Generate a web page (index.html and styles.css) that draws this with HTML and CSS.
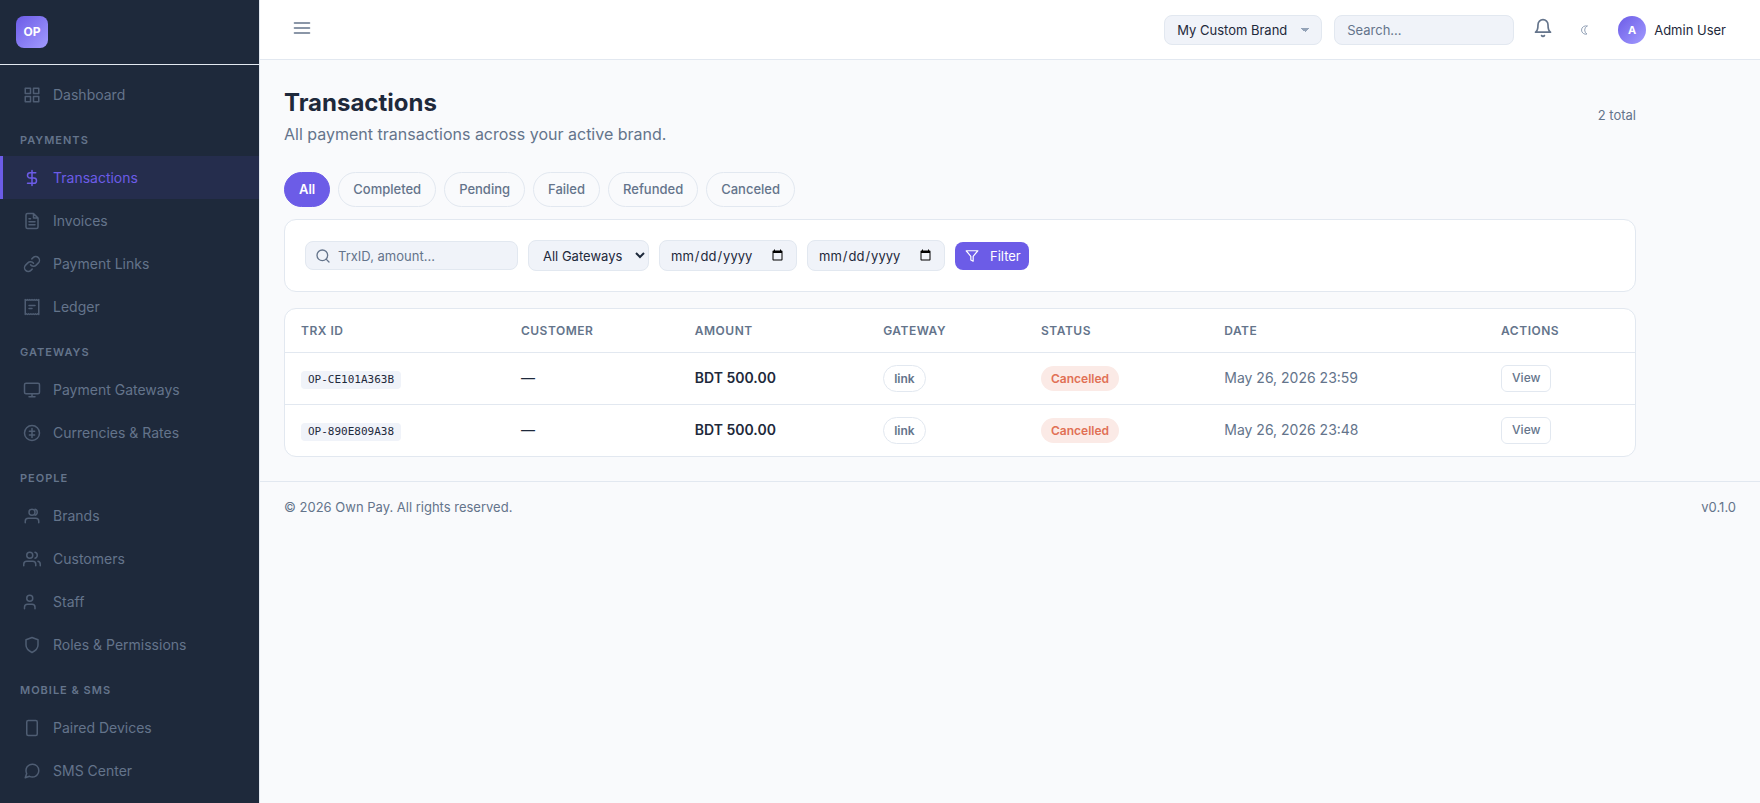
FILE: index.html
```html
<!DOCTYPE html>
<html lang="en">
<head>
<meta charset="utf-8">
<meta name="viewport" content="width=device-width, initial-scale=1">
<title>Transactions - Own Pay</title>
<link rel="stylesheet" href="styles.css">
</head>
<body>
<div class="app">
  <aside class="sidebar">
    <div class="sidebar-header"><span class="logo">OP</span></div>
    <nav class="nav" aria-label="Main">
      <a class="nav-item" href="#"><svg class="nav-icon" viewBox="0 0 24 24"><rect x="3" y="3" width="7" height="7"/><rect x="14" y="3" width="7" height="7"/><rect x="3" y="14" width="7" height="7"/><rect x="14" y="14" width="7" height="7"/></svg>Dashboard</a>
      <div class="nav-label">Payments</div>
      <a class="nav-item active" href="#" aria-current="page"><svg class="nav-icon" viewBox="0 0 24 24"><path d="M12 2v20M17 5H9.500a3.500 3.500 0 0 0 0 7h5a3.500 3.500 0 0 1 0 7H6"/></svg>Transactions</a>
      <a class="nav-item" href="#"><svg class="nav-icon" viewBox="0 0 24 24"><path d="M14 2H6a2 2 0 0 0-2 2v16a2 2 0 0 0 2 2h12a2 2 0 0 0 2-2V8zM14 2v6h6M16 13H8M16 17H8M10 9H8"/></svg>Invoices</a>
      <a class="nav-item" href="#"><svg class="nav-icon" viewBox="0 0 24 24"><path d="M10 13a5 5 0 0 0 7.540.540l3-3a5 5 0 0 0-7.070-7.070l-1.720 1.710M14 11a5 5 0 0 0-7.540-.540l-3 3a5 5 0 0 0 7.070 7.070l1.710-1.710"/></svg>Payment Links</a>
      <a class="nav-item" href="#"><svg class="nav-icon" viewBox="0 0 24 24"><path d="M3 2v20l1.500-1 1.500 1 1.500-1 1.500 1 1.500-1 1.500 1 1.500-1 1.500 1 1.500-1 1.500 1 1.500-1 1.500 1V2l-1.500 1-1.500-1-1.500 1-1.500-1-1.500 1-1.500-1-1.500 1-1.500-1-1.500 1-1.500-1-1.500 1zM8 10h8M8 14h4"/></svg>Ledger</a>
      <div class="nav-label">Gateways</div>
      <a class="nav-item" href="#"><svg class="nav-icon" viewBox="0 0 24 24"><rect x="2" y="3" width="20" height="14" rx="2"/><path d="M8 21h8M12 17v4"/></svg>Payment Gateways</a>
      <a class="nav-item" href="#"><svg class="nav-icon" viewBox="0 0 24 24"><circle cx="12" cy="12" r="10"/><path d="M12 6v12M15.500 9.500h-7M15.500 14.500h-7"/></svg>Currencies &amp; Rates</a>
      <div class="nav-label">People</div>
      <a class="nav-item" href="#"><svg class="nav-icon" viewBox="0 0 24 24"><path d="M21 21v-2a4 4 0 0 0-4-4H7a4 4 0 0 0-4 4v2M16 3.130a4 4 0 0 1 0 7.750"/><circle cx="12" cy="7" r="4"/></svg>Brands</a>
      <a class="nav-item" href="#"><svg class="nav-icon" viewBox="0 0 24 24"><path d="M17 21v-2a4 4 0 0 0-4-4H5a4 4 0 0 0-4 4v2M23 21v-2a4 4 0 0 0-3-3.870M16 3.130a4 4 0 0 1 0 7.750"/><circle cx="9" cy="7" r="4"/></svg>Customers</a>
      <a class="nav-item" href="#"><svg class="nav-icon" viewBox="0 0 24 24"><path d="M16 21v-2a4 4 0 0 0-4-4H6a4 4 0 0 0-4 4v2"/><circle cx="9" cy="7" r="4"/></svg>Staff</a>
      <a class="nav-item" href="#"><svg class="nav-icon" viewBox="0 0 24 24"><path d="M12 22s8-4 8-10V5l-8-3-8 3v7c0 6 8 10 8 10z"/></svg>Roles &amp; Permissions</a>
      <div class="nav-label">Mobile &amp; SMS</div>
      <a class="nav-item" href="#"><svg class="nav-icon" viewBox="0 0 24 24"><rect x="5" y="2" width="14" height="20" rx="2"/></svg>Paired Devices</a>
      <a class="nav-item" href="#"><svg class="nav-icon" viewBox="0 0 24 24"><path d="M21 11.500a8.380 8.380 0 0 1-.9 3.800 8.500 8.500 0 0 1-7.600 4.700 8.380 8.380 0 0 1-3.800-.9L3 21l1.900-5.700a8.380 8.380 0 0 1-.9-3.800 8.500 8.500 0 0 1 4.700-7.600 8.380 8.380 0 0 1 3.800-.9h.5a8.480 8.480 0 0 1 8 8z"/></svg>SMS Center</a>
    </nav>
  </aside>

  <div class="page">
    <header class="topbar">
      <button class="icon-btn" type="button" aria-label="Toggle menu"><svg class="icon-20" viewBox="0 0 24 24"><path d="M3 6h18M3 12h18M3 18h18"/></svg></button>
      <div class="topbar-right">
        <select class="brand-select" aria-label="Brand"><option>My Custom Brand</option></select>
        <input class="top-search" type="search" placeholder="Search..." aria-label="Search">
        <button class="icon-btn" type="button" aria-label="Notifications"><svg class="icon-20" viewBox="0 0 24 24"><path d="M18 8A6 6 0 0 0 6 8c0 7-3 9-3 9h18s-3-2-3-9M13.730 21a2 2 0 0 1-3.460 0"/></svg></button>
        <button class="theme-btn" type="button" aria-label="Toggle theme"><svg class="icon-moon" viewBox="0 0 8 12"><path d="M7 2A4.200 4.200 0 1 0 7 10A4.600 4.600 0 0 1 7 2z"/></svg></button>
        <button class="user" type="button"><span class="avatar">A</span>Admin User</button>
      </div>
    </header>

    <main class="content">
      <div class="page-header">
        <div>
          <h1 class="title">Transactions</h1>
          <p class="subtitle">All payment transactions across your active brand.</p>
        </div>
        <span class="total">2 total</span>
      </div>

      <nav class="pills" aria-label="Status">
        <a class="pill selected" href="#">All</a>
        <a class="pill" href="#">Completed</a>
        <a class="pill" href="#">Pending</a>
        <a class="pill" href="#">Failed</a>
        <a class="pill" href="#">Refunded</a>
        <a class="pill" href="#">Canceled</a>
      </nav>

      <form class="card filters">
        <label class="search-box">
          <svg class="icon-search" viewBox="0 0 24 24"><circle cx="11" cy="11" r="8"/><path d="M21 21l-4.350-4.350"/></svg>
          <input class="search-input" type="text" placeholder="TrxID, amount..." aria-label="Search transactions">
        </label>
        <select class="field gateway" aria-label="Gateway"><option>All Gateways</option></select>
        <input class="field date" type="date" aria-label="From date">
        <input class="field date" type="date" aria-label="To date">
        <button class="filter-btn" type="button"><svg class="icon-filter" viewBox="0 0 24 24"><path d="M22 3H2l8 9.460V19l4 2v-8.540z"/></svg>Filter</button>
      </form>

      <div class="card table-card">
        <table class="table">
          <thead>
            <tr><th>Trx ID</th><th>Customer</th><th>Amount</th><th>Gateway</th><th>Status</th><th>Date</th><th>Actions</th></tr>
          </thead>
          <tbody>
            <tr><td><code class="trx">OP-CE101A363B</code></td><td>—</td><td class="amount">BDT 500.00</td><td><span class="badge outline">link</span></td><td><span class="badge danger">Cancelled</span></td><td class="when">May 26, 2026 23:59</td><td><a class="view" href="#">View</a></td></tr>
            <tr><td><code class="trx">OP-890E809A38</code></td><td>—</td><td class="amount">BDT 500.00</td><td><span class="badge outline">link</span></td><td><span class="badge danger">Cancelled</span></td><td class="when">May 26, 2026 23:48</td><td><a class="view" href="#">View</a></td></tr>
          </tbody>
        </table>
      </div>
    </main>

    <footer class="footer"><span>© 2026 Own Pay. All rights reserved.</span><span>v0.1.0</span></footer>
  </div>
</div>
</body>
</html>
```
FILE: styles.css
```css
:root {
  --primary: #6c5ce7;
  --primary-light: #a29bfe;
  --dark: #1e293b;
  --muted: #64748b;
  --border: #e2e8f0;
  --field: #f0f3f9;
  --bg: #f9fafc;
}

* { box-sizing: border-box; }

body {
  margin: 0;
  background: var(--bg);
  color: var(--dark);
  font-family: Inter, "Liberation Sans", sans-serif;
  font-size: 14px;
  line-height: 24px;
}

a { text-decoration: none; color: inherit; }
button, input, select { font: inherit; color: inherit; }
button { cursor: pointer; }

svg {
  fill: none;
  stroke: currentColor;
  stroke-width: 2;
  stroke-linecap: round;
  stroke-linejoin: round;
  flex: none;
}

.app { display: flex; height: 100vh; }

/* Sidebar */
.sidebar {
  width: 260px;
  flex: none;
  background: var(--dark);
  border-right: 1px solid var(--border);
  overflow: hidden;
}
.sidebar-header {
  display: flex;
  padding: 16px;
  border-bottom: 1px solid var(--border);
}
.logo {
  display: flex;
  align-items: center;
  justify-content: center;
  width: 32px;
  height: 32px;
  border-radius: 8px;
  background: linear-gradient(135deg, var(--primary), var(--primary-light));
  color: #fff;
  font-size: 12px;
  font-weight: 700;
}
.nav { padding: 8px 0; }
.nav-label {
  padding: 16px 20px 8px;
  color: var(--muted);
  font-size: 11px;
  font-weight: 600;
  line-height: 16px;
  letter-spacing: 1px;
  text-transform: uppercase;
}
.nav-item {
  display: flex;
  align-items: center;
  gap: 12px;
  height: 43px;
  padding: 0 20px;
  border-left: 3px solid transparent;
  color: var(--muted);
}
.nav-item.active {
  background: rgba(108, 92, 231, 0.1);
  border-left-color: var(--primary);
  color: var(--primary);
}
.nav-icon { width: 18px; height: 18px; opacity: 0.7; }
.active .nav-icon { opacity: 1; }

/* Top bar */
.page { flex: 1; min-width: 0; overflow: auto; }
.topbar {
  display: flex;
  align-items: center;
  justify-content: space-between;
  height: 60px;
  padding: 0 24px;
  background: #fff;
  border-bottom: 1px solid var(--border);
}
.topbar-right { display: flex; align-items: center; gap: 12px; }
.icon-btn, .theme-btn, .user {
  display: flex;
  align-items: center;
  padding: 8px;
  border: 0;
  background: none;
  color: var(--muted);
}
.icon-btn { padding: 6px 8px 10px; }
.topbar-right .icon-btn { padding: 6px 7px 10px; }
.icon-20 { width: 20px; height: 20px; }
.icon-moon { width: 8px; height: 12px; stroke: #94a3b8; stroke-width: 1; }
.user { gap: 8px; padding: 4px 10px; color: var(--dark); font-size: 13px; }
.avatar {
  display: flex;
  align-items: center;
  justify-content: center;
  width: 28px;
  height: 28px;
  border-radius: 50%;
  background: linear-gradient(135deg, var(--primary), var(--primary-light));
  color: #fff;
  font-size: 11px;
  font-weight: 700;
}
.brand-select, .top-search {
  height: 30px;
  padding: 0 12px;
  border: 1px solid var(--border);
  border-radius: 8px;
  background: var(--field);
  font-size: 13px;
}
.brand-select {
  width: 158px;
  appearance: none;
  background-image: linear-gradient(45deg, transparent 50%, #94a3b8 50%), linear-gradient(-45deg, transparent 50%, #94a3b8 50%);
  background-size: 4px 4px;
  background-position: right 16px center, right 12px center;
  background-repeat: no-repeat;
}
.top-search { width: 180px; }
::placeholder { color: var(--muted); opacity: 1; }

/* Content */
.content { max-width: 1400px; padding: 24px; }
.page-header {
  display: flex;
  align-items: center;
  justify-content: space-between;
  margin-bottom: 26px;
}
.title { margin: 0; font-size: 24px; font-weight: 700; line-height: 38px; }
.subtitle { margin: 0; color: var(--muted); font-size: 16px; line-height: 24px; }
.total { color: var(--muted); font-size: 13px; }

.pills { display: flex; gap: 8px; margin-bottom: 12px; }
.pill {
  padding: 6px 14px;
  border: 1px solid var(--border);
  border-radius: 18px;
  color: var(--muted);
  font-size: 13px;
  font-weight: 500;
  line-height: 21px;
}
.pill.selected {
  background: var(--primary);
  border-color: var(--primary);
  color: #fff;
  font-weight: 600;
}

.card {
  background: #fff;
  border: 1px solid var(--border);
  border-radius: 12px;
}
.filters {
  display: flex;
  align-items: center;
  gap: 10px;
  margin-bottom: 16px;
  padding: 20px;
}
.search-box {
  display: flex;
  align-items: center;
  gap: 7px;
  width: 213px;
  height: 29px;
  padding: 0 9px;
  border: 1px solid var(--border);
  border-radius: 8px;
  background: var(--field);
  color: var(--muted);
}
.icon-search { width: 16px; height: 16px; }
.search-input {
  flex: 1;
  min-width: 0;
  padding: 0;
  border: 0;
  background: none;
  font-size: 13px;
}
.field {
  height: 31px;
  border: 1px solid var(--border);
  border-radius: 8px;
  background: var(--field);
  font-size: 13px;
}
.gateway { width: 121px; padding: 0 0 0 10px; }
.date { width: 138px; padding: 0 10px; }
.filter-btn {
  display: flex;
  align-items: center;
  gap: 11px;
  height: 28px;
  padding: 0 8px 0 10px;
  border: 0;
  border-radius: 8px;
  background: var(--primary);
  color: #fff;
  font-size: 13px;
}
.icon-filter { width: 14px; height: 14px; }

.table-card { overflow: hidden; }
.table { width: 100%; border-collapse: collapse; }
.table th {
  height: 43px;
  padding: 1px 16px 0;
  border-bottom: 1px solid var(--border);
  color: var(--muted);
  font-size: 12px;
  font-weight: 600;
  letter-spacing: 0.5px;
  text-align: left;
  text-transform: uppercase;
}
.table td { height: 52px; padding: 0 16px; border-bottom: 1px solid var(--border); }
.table tbody tr:last-child td { border-bottom: 0; }
.amount { font-weight: 600; }
.when { color: var(--muted); }
.trx {
  display: inline-block;
  padding: 0 7px;
  border-radius: 4px;
  background: var(--field);
  font-family: "DejaVu Sans Mono", monospace;
  font-size: 11px;
  line-height: 18px;
}
.badge {
  display: inline-block;
  padding: 2px 10px;
  border-radius: 14px;
  font-size: 12px;
  font-weight: 600;
  line-height: 21px;
}
.outline { border: 1px solid var(--border); color: var(--muted); }
.danger { background: #fbeae6; color: #e17055; }
.view {
  display: inline-block;
  padding: 1px 10px 3px;
  border: 1px solid var(--border);
  border-radius: 6px;
  color: var(--muted);
  font-size: 12px;
  font-weight: 500;
  line-height: 21px;
}

.footer {
  display: flex;
  justify-content: space-between;
  padding: 13px 24px;
  border-top: 1px solid var(--border);
  color: var(--muted);
  font-size: 13px;
}
```
